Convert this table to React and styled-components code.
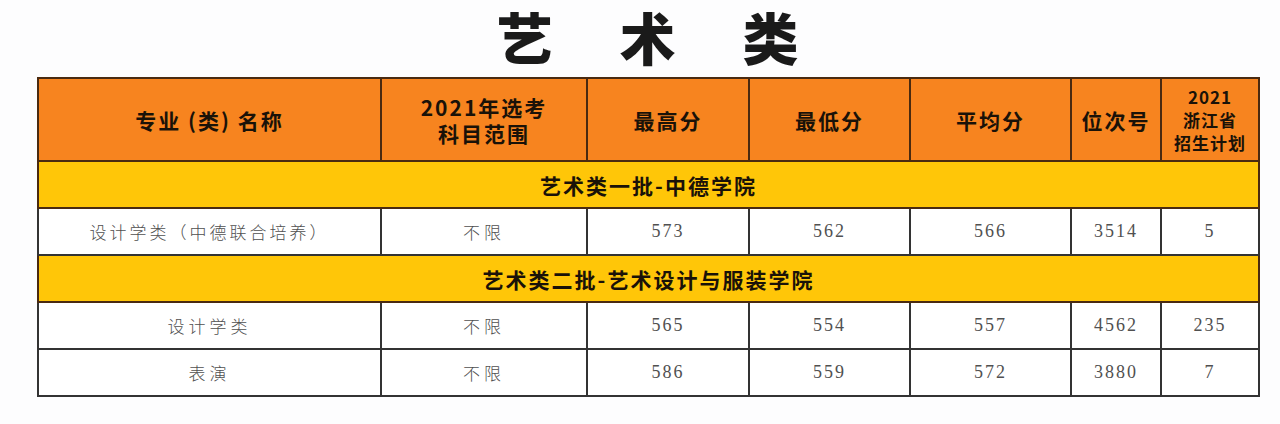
import styled, { createGlobalStyle } from "styled-components";

const GlobalStyle = createGlobalStyle`
  html, body {
    margin: 0;
    padding: 0;
    background: #fdfdfe;
  }
  body {
    font-family: "Noto Sans CJK SC", "Noto Sans", sans-serif;
  }
`;

const columns = [343, 206, 162, 161, 161, 90, 98];

const groups = [
  {
    title: "艺术类一批-中德学院",
    rows: [["设计学类（中德联合培养）", "不限", "573", "562", "566", "3514", "5"]],
  },
  {
    title: "艺术类二批-艺术设计与服装学院",
    rows: [
      ["设计学类", "不限", "565", "554", "557", "4562", "235"],
      ["表演", "不限", "586", "559", "572", "3880", "7"],
    ],
  },
];

export default function App() {
  return (
    <Page>
      <GlobalStyle />
      <Title>
        {"艺术类".split("").map((c) => (
          <TitleChar key={c}>{c}</TitleChar>
        ))}
      </Title>
      <Table>
        <colgroup>
          {columns.map((w, i) => (
            <col key={i} style={{ width: w }} />
          ))}
        </colgroup>
        <thead>
          <tr>
            <HeadCell>专业 (类) 名称</HeadCell>
            <HeadCell>
              <HeadLine>2021年选考</HeadLine>
              <HeadLine>科目范围</HeadLine>
            </HeadCell>
            <HeadCell>最高分</HeadCell>
            <HeadCell>最低分</HeadCell>
            <HeadCell>平均分</HeadCell>
            <HeadCell>位次号</HeadCell>
            <HeadCell $small>
              <HeadLine>2021</HeadLine>
              <HeadLine>浙江省</HeadLine>
              <HeadLine>招生计划</HeadLine>
            </HeadCell>
          </tr>
        </thead>
        <tbody>
          {groups.map((g) => [
            <tr key={g.title}>
              <SectionCell colSpan={7}>{g.title}</SectionCell>
            </tr>,
            ...g.rows.map((r) => (
              <tr key={g.title + r[0]}>
                {r.map((v, i) => (
                  <DataCell key={i} $num={i >= 2} $wide={i === 0 && v.length > 6}>
                    {v}
                  </DataCell>
                ))}
              </tr>
            )),
          ])}
        </tbody>
      </Table>
    </Page>
  );
}

const Page = styled.div`
  width: 1280px;
  height: 424px;
  padding: 0 22px 0 37px;
  box-sizing: border-box;
  overflow: hidden;
`;

const Title = styled.h1`
  margin: 0;
  height: 77px;
  width: 1221px;
  display: flex;
  justify-content: center;
  align-items: center;
  gap: 67px;
  padding-bottom: 5px;
  box-sizing: border-box;
`;

const TitleChar = styled.span`
  font-family: "Noto Sans CJK SC", sans-serif;
  font-weight: 900;
  font-size: 56px;
  line-height: 66px;
  color: #1a1a1a;
`;

const Table = styled.table`
  width: 1221px;
  table-layout: fixed;
  border-collapse: collapse;
  border: 2px solid #3a2a18;
`;

const HeadCell = styled.th`
  height: 81px;
  padding: 0;
  background: #f7841f;
  border: 2px solid #4a2a10;
  color: #1a1208;
  font-family: "Noto Sans CJK SC", sans-serif;
  font-weight: 700;
  font-size: ${(p) => (p.$small ? "17px" : "21px")};
  line-height: ${(p) => (p.$small ? "23px" : "26px")};
  letter-spacing: ${(p) => (p.$small ? "1px" : "2px")};
  text-align: center;
  vertical-align: middle;
`;

const HeadLine = styled.span`
  display: block;
`;

const SectionCell = styled.td`
  height: 45px;
  padding: 0;
  background: #ffc608;
  border: 2px solid #4a2a10;
  color: #1a1208;
  font-family: "Noto Sans CJK SC", sans-serif;
  font-weight: 700;
  font-size: 21px;
  letter-spacing: 2px;
  text-align: center;
  vertical-align: middle;
`;

const DataCell = styled.td`
  height: 45px;
  padding: 0;
  background: #ffffff;
  border: 2px solid #333333;
  color: #505050;
  font-family: ${(p) =>
    p.$num ? '"Liberation Serif", "Noto Sans CJK SC", serif' : '"Noto Sans CJK SC", sans-serif'};
  font-weight: ${(p) => (p.$num ? 400 : 300)};
  font-size: ${(p) => (p.$num ? "18px" : "17px")};
  letter-spacing: ${(p) => (p.$num ? "2px" : p.$wide ? "3px" : "4px")};
  text-align: center;
  vertical-align: middle;
`;
